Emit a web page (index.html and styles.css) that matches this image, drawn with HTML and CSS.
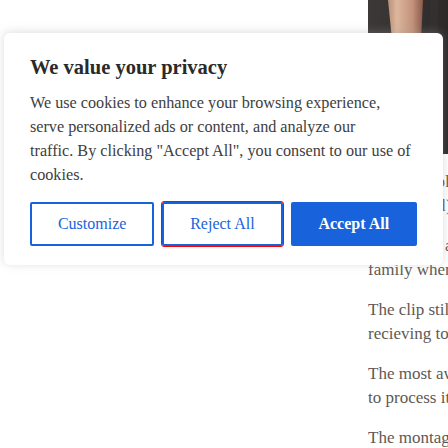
FILE: index.html
```html
<!DOCTYPE html>
<html lang="en">
<head>
<meta charset="utf-8">
<title>Privacy</title>
<link rel="stylesheet" href="styles.css">
</head>
<body>
<div class="page">
  <div class="main"></div>
  <aside class="aside">
    <svg class="photo" viewBox="0 0 160 154" width="160" height="154" aria-hidden="true">
      <defs>
        <linearGradient id="skin" x1="0" y1="0" x2="1" y2="0">
          <stop offset="0" stop-color="#b98f78"/>
          <stop offset="0.25" stop-color="#dcb79e"/>
          <stop offset="0.7" stop-color="#c3927a"/>
          <stop offset="1" stop-color="#8a5a4c"/>
        </linearGradient>
        <linearGradient id="bg" x1="0" y1="0" x2="1" y2="0">
          <stop offset="0" stop-color="#3d3838"/>
          <stop offset="0.3" stop-color="#363131"/>
          <stop offset="0.5" stop-color="#2c2929"/>
          <stop offset="1" stop-color="#262323"/>
        </linearGradient>
      </defs>
      <rect width="160" height="154" fill="url(#bg)"/>
      <path d="M20 0 L55 0 L53 40 L50 90 L34 154 L22 154 L26 60 Z" fill="url(#skin)"/>
      <path d="M62 0 L70 0 L68 154 L61 154 Z" fill="#333030"/>
    </svg>
    <p>Their samples produced<br>footage (all) that was</p>
    <p>It was sent as a gift to the<br>family when they</p>
    <p>The clip still needed<br>recieving to be</p>
    <p>The most awkward part was<br>to process it all</p>
    <p>The montage came</p>
  </aside>
</div>

<div class="consent" role="dialog" aria-label="Cookie consent">
  <h2 class="consent-title">We value your privacy</h2>
  <p class="consent-text">We use cookies to enhance your browsing experience,<br>serve personalized ads or content, and analyze our<br>traffic. By clicking "Accept All", you consent to our use of<br>cookies.</p>
  <div class="consent-btns">
    <button class="btn btn-outline" type="button">Customize</button>
    <button class="btn btn-outline btn-focus" type="button">Reject All</button>
    <button class="btn btn-accept" type="button">Accept All</button>
  </div>
</div>
</body>
</html>
```
FILE: styles.css
```css
html, body {
  margin: 0;
  padding: 0;
  background: #fff;
  overflow: hidden;
}

body {
  width: 448px;
  height: 448px;
  position: relative;
  font-family: "Liberation Serif", "Times New Roman", serif;
}

.page {
  display: flex;
}

.main {
  width: 368px;
  flex-shrink: 0;
}

.aside {
  width: 260px;
  flex-shrink: 0;
}

.photo {
  display: block;
  margin-bottom: 16px;
}

.aside p {
  margin: 0 0 16px;
  font-size: 17px;
  line-height: 24px;
  color: #5e5955;
  white-space: nowrap;
}

.consent {
  position: absolute;
  left: 4px;
  top: 33px;
  width: 439px;
  box-sizing: border-box;
  padding: 22px 26px 19px;
  background: #fff;
  border-radius: 6px;
  box-shadow: 0 -1px 10px 0 rgba(160, 158, 158, 0.35);
}

.consent-title {
  margin: 0 0 12px;
  font-size: 20.5px;
  line-height: 24px;
  font-weight: 700;
  color: #2a2a2a;
}

.consent-text {
  margin: 0;
  font-size: 16.2px;
  line-height: 24px;
  color: #404040;
  white-space: nowrap;
}

.consent-btns {
  display: flex;
  gap: 8px;
  margin-top: 15px;
}

.btn {
  flex: 1 1 auto;
  height: 44px;
  box-sizing: border-box;
  padding: 0 8px;
  border: 2px solid #1863dc;
  border-radius: 2px;
  font-family: "Liberation Serif", "Times New Roman", serif;
  font-size: 16px;
  cursor: pointer;
}

.btn-outline {
  background: #fff;
  color: #1863dc;
}

.btn-focus {
  outline: 1px solid #ff0000;
}

.btn-accept {
  background: #1863dc;
  color: #fff;
  font-weight: 700;
}
```
